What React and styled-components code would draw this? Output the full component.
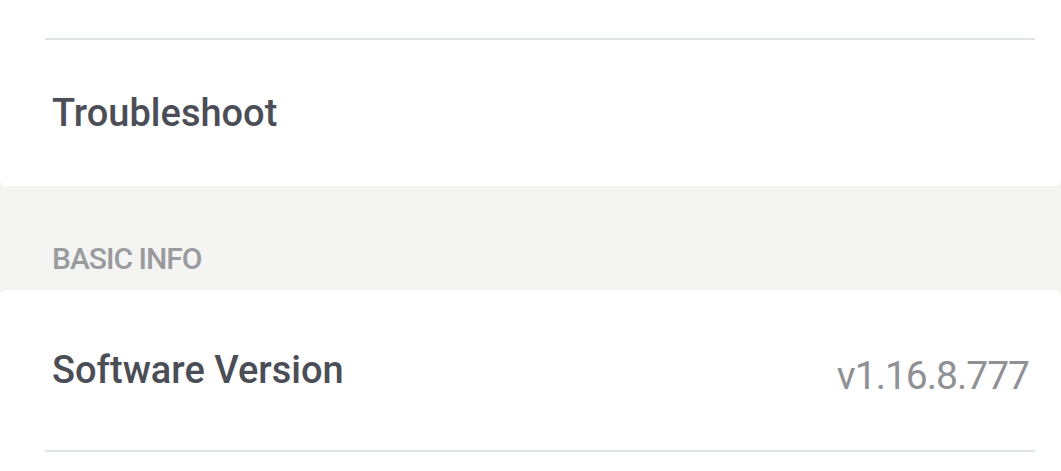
import React from "react";
import styled, { createGlobalStyle } from "styled-components";

const Global = createGlobalStyle`
  html, body { margin: 0; padding: 0; background: #f4f4f3; }
  body { font-family: Roboto, "Liberation Sans", sans-serif; -webkit-font-smoothing: antialiased; }
`;

const Page = styled.div`
  width: 1061px;
  height: 471px;
  overflow: hidden;
  display: flex;
  flex-direction: column;
  background: #f4f4f3;
`;

const Card = styled.section`
  flex-shrink: 0;
  background: #ffffff;
  border-radius: ${(p) => (p.$top ? "0 0 6px 6px" : "6px 6px 0 0")};
  display: flex;
  flex-direction: column;
`;

const Divider = styled.div`
  flex-shrink: 0;
  height: 2px;
  background: #dde4e5;
  margin: 0 26px 0 45px;
`;

const Row = styled.div`
  flex-shrink: 0;
  height: ${(p) => p.$h}px;
  display: flex;
  align-items: center;
  justify-content: space-between;
  padding: 0 32px 0 52px;
`;

const Title = styled.span`
  font-family: Roboto, "Liberation Sans", sans-serif;
  font-size: 38px;
  font-weight: 500;
  color: #4b4e56;
  line-height: 1;
`;

const Value = styled.span`
  font-family: Roboto, "Liberation Sans", sans-serif;
  font-size: 39px;
  letter-spacing: -1px;
  font-weight: 400;
  color: #909195;
  line-height: 1;
  margin-top: 12px;
`;

const SectionHeader = styled.div`
  flex-shrink: 0;
  height: 104px;
  display: flex;
  align-items: flex-end;
  padding: 0 0 16px 52px;
  box-sizing: border-box;
  font-family: Roboto, "Liberation Sans", sans-serif;
  font-size: 30px;
  letter-spacing: -1px;
  line-height: 1;
  font-weight: 500;
  color: #9a9b9f;
`;

export default function App() {
  return (
    <Page>
      <Global />
      <Card $top>
        <Row $h={38} />
        <Divider />
        <Row $h={146}>
          <Title>Troubleshoot</Title>
        </Row>
      </Card>
      <SectionHeader>BASIC INFO</SectionHeader>
      <Card>
        <Row $h={160}>
          <Title>Software Version</Title>
          <Value>v1.16.8.777</Value>
        </Row>
        <Divider />
        <Row $h={40} />
      </Card>
    </Page>
  );
}
